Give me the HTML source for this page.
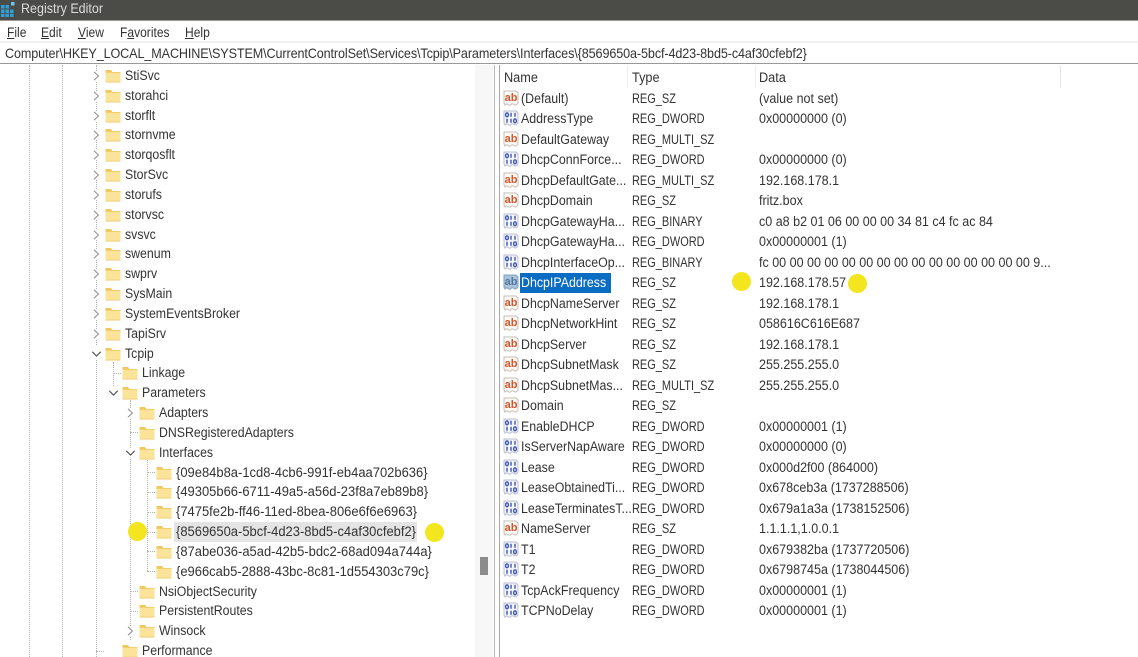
<!DOCTYPE html>
<html><head><meta charset="utf-8"><title>Registry Editor</title>
<style>
html,body{margin:0;padding:0;background:#fff}
#w{position:relative;width:1138px;height:657px;overflow:hidden;background:#fff;font:13.4px/20px "Liberation Sans",sans-serif;color:#333;filter:blur(.25px)}
#w div{box-sizing:border-box}
.a{position:absolute;white-space:nowrap}
.m{transform:scaleX(.9);transform-origin:left;top:23px}
.hd{transform:scaleX(.95);transform-origin:left;top:68px}
#tree{position:absolute;left:0;top:66px;width:476px}
.r{position:relative;height:19.83px;line-height:19.83px;white-space:nowrap}
.r svg{position:absolute;top:3px}
.r span{position:absolute;top:0;transform:scaleX(.92);transform-origin:left}
.l0 .f{left:105px}.l0 span{left:125px}.l0 .c{left:92px}
.l1 .f{left:122px}.l1 span{left:142px}.l1 .c{left:109px}
.l2 .f{left:139px}.l2 span{left:159px}.l2 .c{left:126px}
.l3 .f{left:156px}.l3 span{left:176px;transform:scaleX(.968)}
.f{width:16px;height:14px}
.c{width:9px;height:10px;top:5px!important;background:#fff}
#list{position:absolute;left:0;top:88.5px;width:1138px}
.n{position:relative;height:20.52px;line-height:20.52px;white-space:nowrap}
.n svg{position:absolute;left:503px;top:1px;width:16px;height:17px}
.n span{position:absolute;top:0;transform-origin:left}
.n span:nth-of-type(1){left:521px;transform:scaleX(.925)}
.n span:nth-of-type(2){left:632px;transform:scaleX(.82)}
.n span:nth-of-type(3){left:759px;transform:scaleX(.935)}
.v{position:absolute;width:0;border-left:1px dotted #b4b4b4}
.h{position:absolute;height:0;border-top:1px dotted #b4b4b4}
.y{position:absolute;width:19px;height:19px;border-radius:50%;background:#f4e61e}
</style></head><body>
<div id="w">
<svg width="0" height="0" style="position:absolute"><defs>
<symbol id="fo" viewBox="0 0 16 14"><path d="M.5 1h5.500l1.500 2h8v10.500H.5z" fill="#f0c860"/><path d="M.5 3.800h15v9.700H.5z" fill="#fbe39a"/><path d="M.5 12.700h15v.8H.5z" fill="#eec96a"/></symbol>
<symbol id="ch" viewBox="0 0 9 10"><path d="M2 .8 6.400 5 2 9.200" fill="none" stroke="#9a9a9a" stroke-width="1.200"/></symbol>
<symbol id="cd" viewBox="0 0 9 10"><path d="M.3 2.800 4.500 7 8.700 2.800" fill="none" stroke="#555" stroke-width="1.200"/></symbol>
<symbol id="ab" viewBox="0 0 16 17"><path d="M1 1h12l2 2v10q-2 3-4 1.500t-3 0-3 0-3 .5L1 13z" fill="#fdfaf6" stroke="#c4bdb8"/><text x="8" y="11" text-anchor="middle" font-family="Liberation Sans" font-weight="700" font-size="11" fill="#d2562e">ab</text></symbol>
<symbol id="ac" viewBox="0 0 16 17"><path d="M1 1h12l2 2v10q-2 3-4 1.500t-3 0-3 0-3 .5L1 13z" fill="#a9c3dd" stroke="#84a0bd"/><text x="8" y="11" text-anchor="middle" font-family="Liberation Sans" font-weight="700" font-size="11" fill="#55779e">ab</text></symbol>
<symbol id="bn" viewBox="0 0 16 17"><path d="M1 1h12l2 2v10q-2 3-4 1.500t-3 0-3 0-3 .5L1 13z" fill="#f6f7fc" stroke="#b8bcd0"/><g fill="none" stroke="#3d55b5" stroke-width="1.400"><ellipse cx="4" cy="4.800" rx="1.400" ry="2"/><path d="M8 2.800v4M12 2.800v4"/><path d="M4 8.800v4M8 8.800v4"/><ellipse cx="12" cy="10.800" rx="1.400" ry="2"/></g></symbol>
</defs></svg>

<!-- title bar -->
<div class="a" style="left:0;top:0;width:1138px;height:20px;background:#4b4c48"></div>
<div class="a" style="left:0;top:20px;width:1138px;height:1px;background:#9a9a98"></div>
<svg class="a" style="left:0;top:1px" width="16" height="16" viewBox="0 0 16 16"><path d="M1 4h3.500v3.500H1zM5.500 4H9v3.500H5.500zM1 8.500h3.500V12H1zM5.500 8.500H9V12H5.500zM10 8.500h3.500V12H10zM1 12.800h3.500V16H1zM5.500 12.800H9V16H5.500zM10 12.800h3.500V16H10z" fill="#2f9fd8"/><path d="M11 1h3.500v3.500H11z" fill="#6cc6ee"/></svg>
<div class="a" style="left:21px;top:-1px;color:#dcdcdc;font-size:13.600px;transform:scaleX(.92);transform-origin:left">Registry Editor</div>

<!-- menu -->
<div class="a m" style="left:7px"><u>F</u>ile</div>
<div class="a m" style="left:41px"><u>E</u>dit</div>
<div class="a m" style="left:78px"><u>V</u>iew</div>
<div class="a m" style="left:120px">F<u>a</u>vorites</div>
<div class="a m" style="left:185px"><u>H</u>elp</div>
<div class="a" style="left:0;top:41px;width:1138px;height:2px;background:#f0f0f0"></div>

<!-- address -->
<div class="a" style="left:5px;top:43.500px;font-size:13.600px;letter-spacing:-.12px;transform:scaleX(.927);transform-origin:left">Computer\HKEY_LOCAL_MACHINE\SYSTEM\CurrentControlSet\Services\Tcpip\Parameters\Interfaces\{8569650a-5bcf-4d23-8bd5-c4af30cfebf2}</div>
<div class="a" style="left:0;top:62.500px;width:1138px;height:1.500px;background:#999"></div>

<!-- tree guides -->
<div class="v" style="left:29px;top:65px;height:592px"></div>
<div class="v" style="left:62px;top:65px;height:592px"></div>
<div class="v" style="left:96px;top:65px;height:280px"></div>
<div class="v" style="left:96px;top:360px;height:297px"></div>
<div class="v" style="left:113px;top:362px;height:24px"></div>
<div class="h" style="left:113px;top:373px;width:8px"></div>
<div class="v" style="left:130px;top:400px;height:240px"></div>
<div class="h" style="left:130px;top:432px;width:8px"></div>
<div class="h" style="left:130px;top:591px;width:8px"></div>
<div class="h" style="left:130px;top:611px;width:8px"></div>
<div class="v" style="left:147px;top:460px;height:111px"></div>
<div class="h" style="left:147px;top:472px;width:8px"></div>
<div class="h" style="left:147px;top:492px;width:8px"></div>
<div class="h" style="left:147px;top:512px;width:8px"></div>
<div class="h" style="left:147px;top:532px;width:8px"></div>
<div class="h" style="left:147px;top:551px;width:8px"></div>
<div class="h" style="left:147px;top:571px;width:8px"></div>
<div class="h" style="left:96px;top:651px;width:8px"></div>

<div class="a" style="left:174px;top:522px;width:243px;height:20px;background:#e4e4e4"></div>

<div id="tree">
<div class="r l0"><svg class="c"><use href="#ch"/></svg><svg class="f"><use href="#fo"/></svg><span>StiSvc</span></div>
<div class="r l0"><svg class="c"><use href="#ch"/></svg><svg class="f"><use href="#fo"/></svg><span>storahci</span></div>
<div class="r l0"><svg class="c"><use href="#ch"/></svg><svg class="f"><use href="#fo"/></svg><span>storflt</span></div>
<div class="r l0"><svg class="c"><use href="#ch"/></svg><svg class="f"><use href="#fo"/></svg><span>stornvme</span></div>
<div class="r l0"><svg class="c"><use href="#ch"/></svg><svg class="f"><use href="#fo"/></svg><span>storqosflt</span></div>
<div class="r l0"><svg class="c"><use href="#ch"/></svg><svg class="f"><use href="#fo"/></svg><span>StorSvc</span></div>
<div class="r l0"><svg class="c"><use href="#ch"/></svg><svg class="f"><use href="#fo"/></svg><span>storufs</span></div>
<div class="r l0"><svg class="c"><use href="#ch"/></svg><svg class="f"><use href="#fo"/></svg><span>storvsc</span></div>
<div class="r l0"><svg class="c"><use href="#ch"/></svg><svg class="f"><use href="#fo"/></svg><span>svsvc</span></div>
<div class="r l0"><svg class="c"><use href="#ch"/></svg><svg class="f"><use href="#fo"/></svg><span>swenum</span></div>
<div class="r l0"><svg class="c"><use href="#ch"/></svg><svg class="f"><use href="#fo"/></svg><span>swprv</span></div>
<div class="r l0"><svg class="c"><use href="#ch"/></svg><svg class="f"><use href="#fo"/></svg><span>SysMain</span></div>
<div class="r l0"><svg class="c"><use href="#ch"/></svg><svg class="f"><use href="#fo"/></svg><span>SystemEventsBroker</span></div>
<div class="r l0"><svg class="c"><use href="#ch"/></svg><svg class="f"><use href="#fo"/></svg><span>TapiSrv</span></div>
<div class="r l0"><svg class="c"><use href="#cd"/></svg><svg class="f"><use href="#fo"/></svg><span>Tcpip</span></div>
<div class="r l1"><svg class="f"><use href="#fo"/></svg><span>Linkage</span></div>
<div class="r l1"><svg class="c"><use href="#cd"/></svg><svg class="f"><use href="#fo"/></svg><span>Parameters</span></div>
<div class="r l2"><svg class="c"><use href="#ch"/></svg><svg class="f"><use href="#fo"/></svg><span>Adapters</span></div>
<div class="r l2"><svg class="f"><use href="#fo"/></svg><span>DNSRegisteredAdapters</span></div>
<div class="r l2"><svg class="c"><use href="#cd"/></svg><svg class="f"><use href="#fo"/></svg><span>Interfaces</span></div>
<div class="r l3"><svg class="f"><use href="#fo"/></svg><span>{09e84b8a-1cd8-4cb6-991f-eb4aa702b636}</span></div>
<div class="r l3"><svg class="f"><use href="#fo"/></svg><span>{49305b66-6711-49a5-a56d-23f8a7eb89b8}</span></div>
<div class="r l3"><svg class="f"><use href="#fo"/></svg><span>{7475fe2b-ff46-11ed-8bea-806e6f6e6963}</span></div>
<div class="r l3"><svg class="f"><use href="#fo"/></svg><span>{8569650a-5bcf-4d23-8bd5-c4af30cfebf2}</span></div>
<div class="r l3"><svg class="f"><use href="#fo"/></svg><span>{87abe036-a5ad-42b5-bdc2-68ad094a744a}</span></div>
<div class="r l3"><svg class="f"><use href="#fo"/></svg><span>{e966cab5-2888-43bc-8c81-1d554303c79c}</span></div>
<div class="r l2"><svg class="f"><use href="#fo"/></svg><span>NsiObjectSecurity</span></div>
<div class="r l2"><svg class="f"><use href="#fo"/></svg><span>PersistentRoutes</span></div>
<div class="r l2"><svg class="c"><use href="#ch"/></svg><svg class="f"><use href="#fo"/></svg><span>Winsock</span></div>
<div class="r l1"><svg class="f"><use href="#fo"/></svg><span>Performance</span></div>
</div>

<!-- scrollbar & splitter -->
<div class="a" style="left:475px;top:65px;width:18px;height:592px;background:#f7f7f7"></div>
<div class="a" style="left:480px;top:557px;width:8px;height:18px;background:#8c8c8c"></div>
<div class="a" style="left:494px;top:65px;width:1px;height:592px;background:#b8b8b8"></div>
<div class="a" style="left:499px;top:65px;width:1px;height:592px;background:#a8a8a8"></div>

<!-- list header -->
<div class="a hd" style="left:504px">Name</div>
<div class="a hd" style="left:632px">Type</div>
<div class="a hd" style="left:759px">Data</div>
<div class="a" style="left:627px;top:66px;width:1px;height:22px;background:#ededed"></div>
<div class="a" style="left:755px;top:66px;width:1px;height:22px;background:#ededed"></div>
<div class="a" style="left:1060px;top:66px;width:1px;height:22px;background:#e4e4e4"></div>

<div class="a" style="left:520px;top:273px;width:91px;height:20px;background:#0a6cc2"></div>

<div id="list">
<div class="n"><svg><use href="#ab"/></svg><span>(Default)</span><span>REG_SZ</span><span>(value not set)</span></div>
<div class="n"><svg><use href="#bn"/></svg><span>AddressType</span><span>REG_DWORD</span><span>0x00000000 (0)</span></div>
<div class="n"><svg><use href="#ab"/></svg><span>DefaultGateway</span><span>REG_MULTI_SZ</span><span></span></div>
<div class="n"><svg><use href="#bn"/></svg><span>DhcpConnForce...</span><span>REG_DWORD</span><span>0x00000000 (0)</span></div>
<div class="n"><svg><use href="#ab"/></svg><span>DhcpDefaultGate...</span><span>REG_MULTI_SZ</span><span>192.168.178.1</span></div>
<div class="n"><svg><use href="#ab"/></svg><span>DhcpDomain</span><span>REG_SZ</span><span>fritz.box</span></div>
<div class="n"><svg><use href="#bn"/></svg><span>DhcpGatewayHa...</span><span>REG_BINARY</span><span>c0 a8 b2 01 06 00 00 00 34 81 c4 fc ac 84</span></div>
<div class="n"><svg><use href="#bn"/></svg><span>DhcpGatewayHa...</span><span>REG_DWORD</span><span>0x00000001 (1)</span></div>
<div class="n"><svg><use href="#bn"/></svg><span>DhcpInterfaceOp...</span><span>REG_BINARY</span><span>fc 00 00 00 00 00 00 00 00 00 00 00 00 00 00 00 9...</span></div>
<div class="n"><svg><use href="#ac"/></svg><span style="color:#fff">DhcpIPAddress</span><span>REG_SZ</span><span>192.168.178.57</span></div>
<div class="n"><svg><use href="#ab"/></svg><span>DhcpNameServer</span><span>REG_SZ</span><span>192.168.178.1</span></div>
<div class="n"><svg><use href="#ab"/></svg><span>DhcpNetworkHint</span><span>REG_SZ</span><span>058616C616E687</span></div>
<div class="n"><svg><use href="#ab"/></svg><span>DhcpServer</span><span>REG_SZ</span><span>192.168.178.1</span></div>
<div class="n"><svg><use href="#ab"/></svg><span>DhcpSubnetMask</span><span>REG_SZ</span><span>255.255.255.0</span></div>
<div class="n"><svg><use href="#ab"/></svg><span>DhcpSubnetMas...</span><span>REG_MULTI_SZ</span><span>255.255.255.0</span></div>
<div class="n"><svg><use href="#ab"/></svg><span>Domain</span><span>REG_SZ</span><span></span></div>
<div class="n"><svg><use href="#bn"/></svg><span>EnableDHCP</span><span>REG_DWORD</span><span>0x00000001 (1)</span></div>
<div class="n"><svg><use href="#bn"/></svg><span>IsServerNapAware</span><span>REG_DWORD</span><span>0x00000000 (0)</span></div>
<div class="n"><svg><use href="#bn"/></svg><span>Lease</span><span>REG_DWORD</span><span>0x000d2f00 (864000)</span></div>
<div class="n"><svg><use href="#bn"/></svg><span>LeaseObtainedTi...</span><span>REG_DWORD</span><span>0x678ceb3a (1737288506)</span></div>
<div class="n"><svg><use href="#bn"/></svg><span>LeaseTerminatesT...</span><span>REG_DWORD</span><span>0x679a1a3a (1738152506)</span></div>
<div class="n"><svg><use href="#ab"/></svg><span>NameServer</span><span>REG_SZ</span><span>1.1.1.1,1.0.0.1</span></div>
<div class="n"><svg><use href="#bn"/></svg><span>T1</span><span>REG_DWORD</span><span>0x679382ba (1737720506)</span></div>
<div class="n"><svg><use href="#bn"/></svg><span>T2</span><span>REG_DWORD</span><span>0x6798745a (1738044506)</span></div>
<div class="n"><svg><use href="#bn"/></svg><span>TcpAckFrequency</span><span>REG_DWORD</span><span>0x00000001 (1)</span></div>
<div class="n"><svg><use href="#bn"/></svg><span>TCPNoDelay</span><span>REG_DWORD</span><span>0x00000001 (1)</span></div>
</div>

<!-- yellow markers -->
<div class="y" style="left:128px;top:522px"></div>
<div class="y" style="left:425px;top:523px"></div>
<div class="y" style="left:732px;top:272px"></div>
<div class="y" style="left:848px;top:274px"></div>
</div>
</body></html>
